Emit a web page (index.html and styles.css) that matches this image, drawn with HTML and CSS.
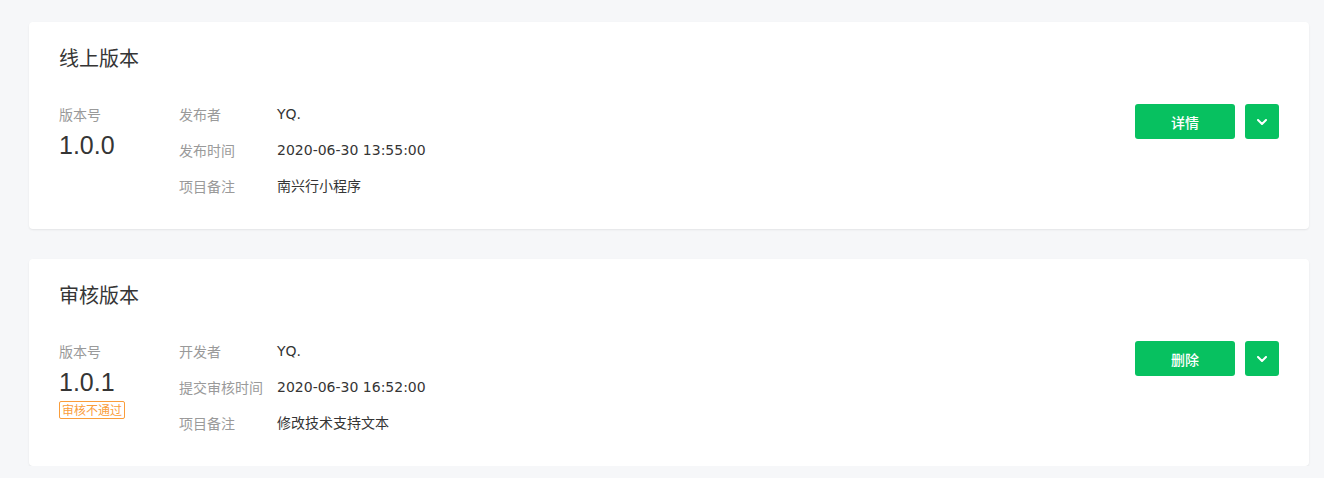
FILE: index.html
```html
<!DOCTYPE html>
<html lang="zh-CN">
<head>
<meta charset="utf-8">
<title>版本管理</title>
<link rel="stylesheet" href="styles.css">
</head>
<body>
<main class="page">
  <section class="card">
    <h2 class="card-title">线上版本</h2>
    <div class="card-body">
      <div class="ver">
        <div class="ver-label">版本号</div>
        <div class="ver-num">1.0.0</div>
      </div>
      <dl class="info">
        <dt>发布者</dt><dd>YQ.</dd>
        <dt>发布时间</dt><dd>2020-06-30 13:55:00</dd>
        <dt>项目备注</dt><dd>南兴行小程序</dd>
      </dl>
      <div class="actions">
        <button class="btn btn-main">详情</button>
        <button class="btn btn-more" aria-label="更多"><svg width="10" height="6" viewBox="0 0 10 6"><path d="M1 1 L5 5 L9 1" fill="none" stroke="#fff" stroke-width="2" stroke-linecap="round" stroke-linejoin="round"/></svg></button>
      </div>
    </div>
  </section>
  <section class="card">
    <h2 class="card-title">审核版本</h2>
    <div class="card-body">
      <div class="ver">
        <div class="ver-label">版本号</div>
        <div class="ver-num">1.0.1</div>
        <span class="tag">审核不通过</span>
      </div>
      <dl class="info">
        <dt>开发者</dt><dd>YQ.</dd>
        <dt>提交审核时间</dt><dd>2020-06-30 16:52:00</dd>
        <dt>项目备注</dt><dd>修改技术支持文本</dd>
      </dl>
      <div class="actions">
        <button class="btn btn-main">删除</button>
        <button class="btn btn-more" aria-label="更多"><svg width="10" height="6" viewBox="0 0 10 6"><path d="M1 1 L5 5 L9 1" fill="none" stroke="#fff" stroke-width="2" stroke-linecap="round" stroke-linejoin="round"/></svg></button>
      </div>
    </div>
  </section>
</main>
</body>
</html>
```

FILE: styles.css
```css
* { box-sizing: border-box; }
html, body { margin: 0; padding: 0; }
body {
  background: #f6f7f9;
  font-family: "Noto Sans CJK SC", "Noto Sans", sans-serif;
  color: #353535;
}
.page {
  padding: 22px 15px 0 29px;
  display: flex;
  flex-direction: column;
  gap: 30px;
}
.card {
  background: #fff;
  border-radius: 4px;
  box-shadow: 0 1px 2px rgba(0, 0, 0, 0.08);
  padding: 22px 30px 25px 30px;
}
.card-title {
  margin: 0;
  font-size: 20px;
  line-height: 28px;
  font-weight: 400;
  color: #353535;
}
.card-body {
  margin-top: 24px;
  display: flex;
  align-items: flex-start;
}
.ver {
  width: 120px;
  padding-top: 8px;
  display: flex;
  flex-direction: column;
  align-items: flex-start;
}
.ver-label {
  font-size: 14px;
  line-height: 20px;
  color: #9a9a9a;
}
.ver-num {
  margin-top: 3px;
  font-family: "Liberation Sans", Arial, sans-serif;
  font-size: 25px;
  line-height: 36px;
  color: #353535;
}
.tag {
  margin-top: 1px;
  font-size: 12px;
  line-height: 16px;
  padding: 0 2px;
  color: #fa9d3b;
  border: 1px solid #fa9d3b;
  border-radius: 2px;
}
.info {
  margin: 0;
  display: grid;
  grid-template-columns: 98px auto;
  font-size: 14px;
  line-height: 36px;
}
.info dt {
  color: #9a9a9a;
}
.info dd {
  margin: 0;
  font-family: "DejaVu Sans", "Noto Sans CJK SC", sans-serif;
  color: #353535;
}
.actions {
  margin-left: auto;
  margin-top: 8px;
  display: flex;
  gap: 10px;
}
.btn {
  border: 0;
  border-radius: 3px;
  background: #07c160;
  color: #fff;
  height: 35px;
  font-family: "Noto Sans CJK SC", sans-serif;
  font-size: 14px;
  font-weight: 500;
  padding: 0;
  display: flex;
  align-items: center;
  justify-content: center;
}
.btn-main { width: 100px; }
.btn-more { width: 34px; }
```
